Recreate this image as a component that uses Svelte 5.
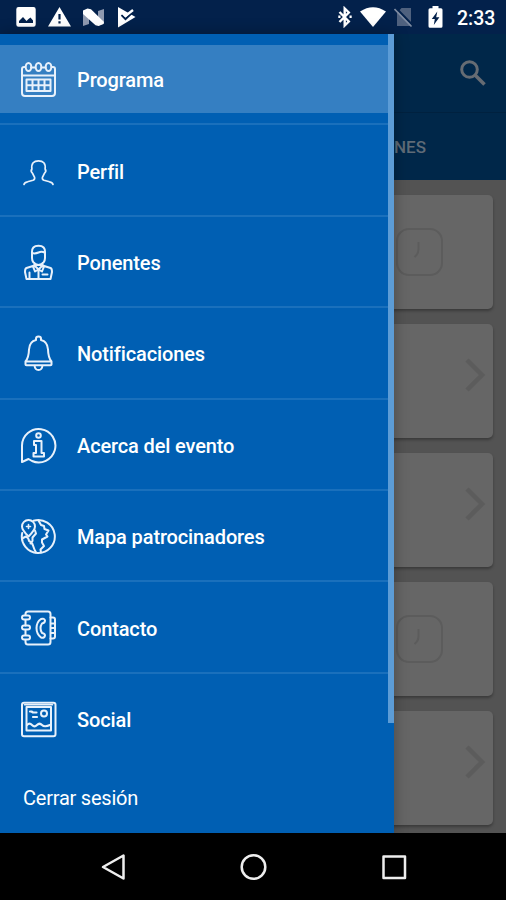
<script lang="ts">
  type Item = { id: string; label: string };

  const items: Item[] = [
    { id: "calendar", label: "Programa" },
    { id: "profile", label: "Perfil" },
    { id: "speaker", label: "Ponentes" },
    { id: "bell", label: "Notificaciones" },
    { id: "info", label: "Acerca del evento" },
    { id: "map", label: "Mapa patrocinadores" },
    { id: "contact", label: "Contacto" },
    { id: "social", label: "Social" },
  ];

  const cards = ["clock", "chevron", "chevron", "clock", "chevron"];

  let active = $state("calendar");
</script>

<div class="screen">
  <header class="status">
    <div class="notices">
      <svg width="20" height="20" viewBox="0 0 20 20">
        <path
          fill="#fff"
          fill-rule="evenodd"
          d="M2.5 0h15a2.2 2.2 0 0 1 2.2 2.2v15.3a2.2 2.2 0 0 1-2.2 2.2h-15a2.2 2.2 0 0 1-2.2-2.2V2.2A2.2 2.2 0 0 1 2.5 0zM3 16h14v-2.5l-2.5-3-2 1.5-2 2-3.5-4L3 14z"
        />
      </svg>
      <svg width="23" height="20" viewBox="0 0 23 20">
        <path fill="#fff" fill-rule="evenodd" d="M11.5 0 23 19.5H0zM10.4 7v5.5h2.2V7zm0 7.3v2.3h2.2v-2.3z" />
      </svg>
      <svg width="21" height="19" viewBox="0 0 21 19">
        <path fill="#8f9ab0" d="M0 3.5 6 1v15l-6 2zM15 3l6-2v14.5L15 18z" />
        <path fill="#fff" d="M0 2.5 4.5.5 8 1.2 21 14l-.5 2-5 2-3-.8L0 6z" />
      </svg>
      <svg class="check" width="20" height="21" viewBox="0 0 20 21">
        <path fill="#fff" d="M1 0 18.5 10 1 20.5z" />
        <path fill="none" stroke="#03214b" stroke-width="2" d="M4.5 8 8.5 12 18 3" />
        <path fill="none" stroke="#fff" stroke-width="2.4" d="M5 5.5 8.5 9 16 3" />
      </svg>
    </div>
    <div class="system">
      <svg width="14" height="22" viewBox="0 0 14 22">
        <path fill="none" stroke="#fff" stroke-width="2.4" d="M1.5 6l9.3 9.5-4.1 4V2.5l4.1 4L1.5 16M.3 10.8h2.2M11.5 10.800h2.200" />
      </svg>
      <svg class="wifi" width="26" height="20" viewBox="0 0 26 20">
        <path fill="#fff" d="M0 4.5Q13-4 26 4.5L13 20z" />
      </svg>
      <svg class="sim" width="19" height="21" viewBox="0 0 19 21">
        <path fill="#4f617e" d="M7.5 1H17v18H3V6z" />
        <path stroke="#03214b" stroke-width="2" d="M2 1l17 17.5" />
        <path stroke="#7f8ca2" stroke-width="1.6" d="M.5 2l17 17.5" />
      </svg>
      <svg class="battery" width="15" height="22" viewBox="0 0 15 22">
        <path fill="#fff" d="M4.5 0h6v2.3H13a1.5 1.5 0 0 1 1.5 1.5v16.4a1.5 1.5 0 0 1-1.5 1.5H2A1.5 1.5 0 0 1 .5 20.2V3.8A1.5 1.5 0 0 1 2 2.3h2.5z" />
        <path fill="#03214b" d="M9.3 5.5 3.8 13h3L5.8 19l5.6-7.7H8.2z" />
      </svg>
      <span class="time">2:33</span>
    </div>
  </header>

  <main class="app">
    <div class="toolbar">
      <svg width="26" height="26" viewBox="0 0 26 26">
        <circle cx="9.5" cy="9.5" r="7.8" />
        <path d="M15 15l9.5 9.5" stroke-width="3.6" />
      </svg>
    </div>
    <div class="tabs"><span>SESIONES</span></div>
    <div class="list">
      {#each cards as kind}
        <article class="card {kind}">
          {#if kind === "clock"}
            <svg width="50" height="50" viewBox="0 0 50 50">
              <rect x="3" y="2" width="45" height="46" rx="12" />
              <path d="M24.5 15v7q0 5-4 8" />
            </svg>
          {:else}
            <svg width="22" height="34" viewBox="0 0 22 34">
              <path d="M3 2l15 15L3 32" stroke-width="4.5" />
            </svg>
          {/if}
        </article>
      {/each}
    </div>

    <nav class="drawer">
      <ul>
        {#each items as item}
          <li>
            <button class:active={active === item.id} onclick={() => (active = item.id)}>
              <svg class="icon" width="37" height="37" viewBox="0 0 37 37">
                {#if item.id === "calendar"}
                  <path d="M4.5 6H4Q2 6 2 8v24q0 3 3 3h27q3 0 3-3V8q0-2-2-2h-.5M11 6.5h4M21.5 6.5h4M2 14.5h33" />
                  <ellipse cx="8.5" cy="6" rx="2.8" ry="4" />
                  <ellipse cx="18.5" cy="6" rx="2.8" ry="4" />
                  <ellipse cx="28.5" cy="6" rx="2.8" ry="4" />
                  <path d="M6.5 18.5h24v11.5h-24zM6.5 24.2h24M12.5 18.5v11.5M18.5 18.5v11.5M24.5 18.5v11.5" />
                {:else if item.id === "profile"}
                  <path
                    stroke-width="1.7"
                    d="M4 31.5q.3-2 3.5-2.7l5.5-1.5q2-.8 1.600-3-.8-1.500-2-4c-1.500-1.300-1.700-3-.7-4.200-.8-6 2-8.300 6.600-8.300s7.400 2.300 6.600 8.300c1 1.200.8 2.900-.7 4.200q-1.200 2.500-2 4-.4 2.200 1.600 3l5.500 1.500q3.200.7 3.500 2.700"
                  />
                {:else if item.id === "speaker"}
                  <path d="M12 9Q11.5 1.700 18.5 1.7T25 9v5q0 6-6.5 7-6.5-1-6.5-7zM12 9q3 1 6.5-.5T25 9M14.5 19v3.5M22.5 19v3.5" />
                  <path d="M14.5 21.5l-8 2.5Q5 24.5 5 28l1.5 7h24l1.5-7q0-3.5-1.5-4l-8-2.5M14.5 21.5l4 4 4-4M13 22.5l2 5 3.5-2 3.5 2 2-5M18.5 26v9M9.5 28.5v6M22.5 30.5h5" />
                {:else if item.id === "bell"}
                  <path d="M16 5V3.7Q16 1.500 18.500 1.500T21 3.700V5q6.500 1.500 7 9.500.2 8 3.500 12H5.500q3.300-4 3.500-12Q9.500 6.500 16 5zM5.500 26.500v3q0 .8 1 .8h24q1 0 1-.8v-3M14.500 30.500q.5 4.500 4 4.500t4-4.500" />
                {:else if item.id === "info"}
                  <path d="M2 35V18.500A16.700 16.700 0 1 1 12 34L8.500 32z" />
                  <circle cx="18.5" cy="8.500" r="2.300" />
                  <path d="M14 14h7.500v12H24v3.500H13.500V26H16v-8h-2z" />
                {:else if item.id === "map"}
                  <path d="M13.500 2.700A16.500 16.500 0 1 1 2.200 15" />
                  <path d="M8.500 18.500Q2 12 2 8.500a6.500 6.500 0 0 1 13 0Q15 12 8.500 18.500z" />
                  <path d="M8.500 6.500v4M6.500 8.500h4" stroke-width="1.6" />
                  <path d="M3 20l3-1.500q3 2 3 4.500 3 1 4 4.500t3 7M15 12.500l1 3-3.500 4v3.500l-2 2.500M18.500 2.500l2.500 4.500 3 1 .5 3 4 1.500-2.500 4 1.500 2-5.500 3v3l2 3.500-3.500 3.500.5 3" />
                {:else if item.id === "contact"}
                  <path d="M5.500 5V4q0-2.500 2.500-2.500h20Q30.500 1.500 30.500 4v28q0 2.500-2.500 2.500H8Q5.500 34.500 5.500 32v-2M5.500 10v5.500M5.500 20.500V25" />
                  <rect x="2" y="5.500" width="8" height="4" rx="2" />
                  <rect x="2" y="15.500" width="8" height="4" rx="2" />
                  <rect x="2" y="25.500" width="8" height="4" rx="2" />
                  <path d="M30.500 7.500H33q2 0 2 2v17q0 2-2 2h-2.500M31 13.500h4M31 18h4M31 23h4" />
                  <path d="M25 10.500q-.5-2.500-4-1.500-4.500 3-4.500 9t4.500 9.500q3.500 1 4-2 0-2-3-2.500-3-5 0-9.500 3-.5 3-3z" />
                {:else}
                  <rect x="2" y="1.700" width="33.500" height="33.500" rx="2" />
                  <rect x="6.500" y="6" width="24.500" height="23.500" />
                  <path d="M4.500 3.800h28" stroke-width="1.600" />
                  <path d="M10 10.500h1.500l1.500 1h3.500M13 16h4M7 24q2.500-2.500 5 0t5 0 5 0 8 0" stroke-width="2.200" />
                  <circle cx="24" cy="12.500" r="3" />
                {/if}
              </svg>
              <span>{item.label}</span>
            </button>
          </li>
        {/each}
      </ul>
      <button class="logout">Cerrar sesión</button>
      <div class="scrollbar"></div>
    </nav>
  </main>

  <footer class="navbar">
    <svg width="28" height="28" viewBox="0 0 28 28"><path d="M4 14 24.5 2.5v23z" /></svg>
    <svg width="28" height="28" viewBox="0 0 28 28"><circle cx="13.5" cy="14" r="11.8" /></svg>
    <svg width="28" height="28" viewBox="0 0 28 28"><rect x="3.500" y="3.500" width="21.500" height="21.500" /></svg>
  </footer>
</div>

<style>
  :global(body) {
    margin: 0;
    background: #000;
  }

  .screen {
    display: flex;
    flex-direction: column;
    width: 506px;
    height: 900px;
    overflow: hidden;
    font-family: Roboto, "Noto Sans", sans-serif;
    color: #fff;
  }

  svg {
    display: block;
    flex: none;
  }

  .status {
    display: flex;
    justify-content: space-between;
    box-sizing: border-box;
    height: 34px;
    padding: 0 11px 0 16px;
    background: #03214b;
  }

  .notices,
  .system {
    display: flex;
    align-items: center;
  }

  .notices {
    gap: 12px;
  }

  .check {
    margin-left: 1px;
  }

  .wifi {
    margin-left: 8px;
  }

  .sim {
    margin-left: 8px;
  }

  .battery {
    margin-left: 15px;
  }

  .time {
    width: 38px;
    margin-left: 14px;
    padding-top: 3px;
    font-size: 19.5px;
    font-weight: 500;
    line-height: 30px;
    white-space: nowrap;
  }

  .app {
    position: relative;
    display: flex;
    flex-direction: column;
    height: 799px;
    background: #535353;
  }

  .toolbar {
    display: flex;
    align-items: center;
    justify-content: flex-end;
    box-sizing: border-box;
    height: 79px;
    padding-right: 20px;
    background: #002749;
    border-bottom: 1px solid #00213f;
  }

  .toolbar svg {
    fill: none;
    stroke: #666c73;
    stroke-width: 3;
  }

  .tabs {
    display: flex;
    align-items: center;
    justify-content: flex-end;
    box-sizing: border-box;
    height: 67px;
    padding-right: 80px;
    background: #002749;
    color: #5f6b77;
    font-size: 17px;
    font-weight: 500;
  }

  .list {
    display: flex;
    flex-direction: column;
    gap: 14.5px;
    padding: 14.5px 13px 8px;
  }

  .card {
    display: flex;
    align-items: center;
    justify-content: flex-end;
    box-sizing: border-box;
    height: 114.5px;
    border-radius: 5px;
    background: #666;
    box-shadow: 0 2px 3px rgb(0 0 0 / 0.3);
  }

  .card svg {
    fill: none;
    stroke: #5c5c5c;
    stroke-width: 2;
  }

  .card.clock {
    padding-right: 49px;
  }

  .card.chevron {
    padding: 0 7px 11px 0;
  }

  .drawer {
    position: absolute;
    top: 0;
    bottom: 0;
    left: 0;
    width: 394px;
    background: #005fb3;
    box-shadow: 0 0 14px rgb(0 0 0 / 0.3);
  }

  .drawer ul {
    margin: 0;
    padding: 0;
    list-style: none;
  }

  .drawer li {
    display: flex;
    align-items: center;
    box-sizing: border-box;
    height: 91.4px;
    border-bottom: 2px solid #1a70bc;
  }

  .drawer li:last-child {
    border-bottom-color: transparent;
  }

  button {
    border: 0;
    background: none;
    color: inherit;
    font: inherit;
    text-align: left;
  }

  .drawer li button {
    display: flex;
    align-items: center;
    gap: 20px;
    width: 100%;
    height: 68px;
    padding: 0 0 0 20px;
    font-size: 20px;
    font-weight: 500;
    letter-spacing: -0.13px;
  }

  .drawer li button span {
    padding-top: 3px;
  }

  .drawer li button.active {
    background: #357fc2;
  }

  .icon {
    margin-top: 2px;
    fill: none;
    stroke: #e8f1fb;
    stroke-width: 2;
    stroke-linejoin: round;
    stroke-linecap: round;
  }

  .logout {
    display: block;
    padding: 0 23px;
    font-size: 20px;
    line-height: 66px;
    letter-spacing: -0.22px;
  }

  .scrollbar {
    position: absolute;
    top: 0;
    right: 0;
    width: 6px;
    height: 689px;
    background: #5c9cd6;
  }

  .navbar {
    display: flex;
    align-items: center;
    justify-content: space-between;
    height: 67px;
    padding: 0 98px 0 99px;
    background: #000;
  }

  .navbar svg {
    fill: none;
    stroke: #eee;
    stroke-width: 2.5;
    stroke-linejoin: round;
  }
</style>
